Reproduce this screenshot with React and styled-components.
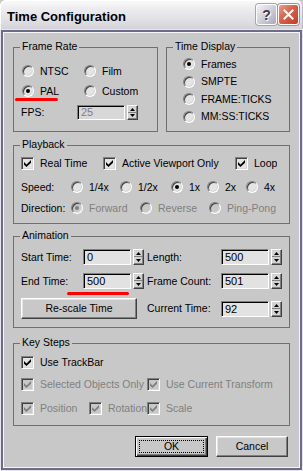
import React from "react";
import styled, { createGlobalStyle, css } from "styled-components";

const GlobalStyle = createGlobalStyle`
  html, body {
    margin: 0;
    padding: 0;
    background: #c8c8c8;
  }

  body {
    font-family: "Liberation Sans", Arial, sans-serif;
    font-size: 10.5px;
    line-height: 13px;
    color: #000;
  }
`;

function Check({ on, dis, w, label }) {
  return (
    <Cell $w={w}>
      <CheckBox $dis={dis}>
        {on && (
          <svg width="7" height="7" viewBox="0 0 7 7">
            <path d="M0 2L2.5 4.5L7 0V2.8L2.5 7L0 4.8Z" fill={dis ? "#808080" : "#000"} />
          </svg>
        )}
      </CheckBox>
      <Label $dis={dis}>{label}</Label>
    </Cell>
  );
}

function Radio({ on, dis, w, label }) {
  return (
    <Cell $w={w}>
      <RadioDot $on={on} $dis={dis} />
      <Label $dis={dis}>{label}</Label>
    </Cell>
  );
}

function Spinner({ value, dis, h = 16 }) {
  return (
    <SpinWrap>
      <Field $h={h} $dis={dis}>{value}</Field>
      <Arrows $h={h}>
        <ArrowBtn>
          <svg width="5" height="3" viewBox="0 0 5 3">
            <path d="M2.5 0L5 3H0Z" fill="#000" />
          </svg>
        </ArrowBtn>
        <ArrowBtn>
          <svg width="5" height="3" viewBox="0 0 5 3">
            <path d="M0 0H5L2.5 3Z" fill="#000" />
          </svg>
        </ArrowBtn>
      </Arrows>
    </SpinWrap>
  );
}

function App() {
  return (
    <>
      <GlobalStyle />
      <Window>
        <TitleBar>
          <Title>Time Configuration</Title>
          <CaptionButtons>
            <CaptionBtn>
              <HelpGlyph>?</HelpGlyph>
            </CaptionBtn>
            <CaptionBtn $close>
              <svg width="11" height="11" viewBox="0 0 11 11">
                <path d="M1.5 1.5L9.5 9.5M9.5 1.5L1.5 9.5" stroke="#fff" strokeWidth="2.2" strokeLinecap="square" />
              </svg>
            </CaptionBtn>
          </CaptionButtons>
        </TitleBar>

        <Body>
          <TopRow>
            <Group $w={145} $h={85}>
              <Legend>Frame Rate</Legend>
              <Row $mt={13} $pl={8} $h={20}>
                <Radio w={62} label="NTSC" />
                <Radio label="Film" />
              </Row>
              <Row $pl={8} $h={20}>
                <Radio w={62} label="PAL" on />
                <Radio label="Custom" />
              </Row>
              <Row $mt={4} $pl={7} $h={15}>
                <Cell $w={56}>
                  <Label>FPS:</Label>
                </Cell>
                <Spinner value="25" dis h={15} />
              </Row>
              <Mark $l={1} $t={50} $w={43} />
            </Group>

            <Group $w={124} $h={85}>
              <Legend>Time Display</Legend>
              <Stack $mt={7.5} $pl={16}>
                <Row $h={17.5}>
                  <Radio label="Frames" on />
                </Row>
                <Row $h={17.5}>
                  <Radio label="SMPTE" />
                </Row>
                <Row $h={17.5}>
                  <Radio label="FRAME:TICKS" />
                </Row>
                <Row $h={17.5}>
                  <Radio label="MM:SS:TICKS" />
                </Row>
              </Stack>
            </Group>
          </TopRow>

          <Group $h={79} $mt={13}>
            <Legend>Playback</Legend>
            <Row $mt={6} $h={22} $pl={7}>
              <Check w={82} on label="Real Time" />
              <Check w={132} on label="Active Viewport Only" />
              <Check on label="Loop" />
            </Row>
            <Row $mt={2} $h={22} $pl={7}>
              <Cell $w={50}>
                <Label>Speed:</Label>
              </Cell>
              <Radio w={49} label="1/4x" />
              <Radio w={51} label="1/2x" />
              <Radio w={36} label="1x" on />
              <Radio w={39} label="2x" />
              <Radio label="4x" />
            </Row>
            <Row $h={20} $pl={7}>
              <Cell $w={50}>
                <Label>Direction:</Label>
              </Cell>
              <Radio w={69} label="Forward" on dis />
              <Radio w={69} label="Reverse" dis />
              <Radio label="Ping-Pong" dis />
            </Row>
          </Group>

          <Group $h={92} $mt={12}>
            <Legend>Animation</Legend>
            <Row $mt={12} $h={16} $pl={7}>
              <Cell $w={126}>
                <FieldLabel $w={56}>Start Time:</FieldLabel>
                <Spinner value="0" />
              </Cell>
              <FieldLabel $w={74}>Length:</FieldLabel>
              <Spinner value="500" />
            </Row>
            <Row $mt={8} $h={16} $pl={7}>
              <Cell $w={126}>
                <FieldLabel $w={56}>End Time:</FieldLabel>
                <Spinner value="500" />
              </Cell>
              <FieldLabel $w={74}>Frame Count:</FieldLabel>
              <Spinner value="501" />
            </Row>
            <Row $mt={9} $h={21} $pl={7}>
              <Cell $w={126}>
                <PushButton $w={116}>Re-scale Time</PushButton>
              </Cell>
              <FieldLabel $w={74}>Current Time:</FieldLabel>
              <Spinner value="92" />
            </Row>
            <Mark $l={53} $t={55} $w={62} />
          </Group>

          <Group $h={83} $mt={15}>
            <Legend>Key Steps</Legend>
            <Row $mt={8} $h={20} $pl={7}>
              <Check on label="Use TrackBar" />
            </Row>
            <Row $mt={2} $h={20} $pl={7}>
              <Check w={126} on dis label="Selected Objects Only" />
              <Check on dis label="Use Current Transform" />
            </Row>
            <Row $mt={4} $h={20} $pl={7}>
              <Check w={68} on dis label="Position" />
              <Check w={58} on dis label="Rotation" />
              <Check on dis label="Scale" />
            </Row>
          </Group>

          <ButtonRow>
            <PushButton $w={73} $default>OK</PushButton>
            <PushButton $w={72}>Cancel</PushButton>
          </ButtonRow>
        </Body>
      </Window>
    </>
  );
}

const Window = styled.div`
  width: 303px;
  height: 471px;
  display: flex;
  flex-direction: column;
  overflow: hidden;
  background: #c8c8c8;
`;

const TitleBar = styled.div`
  flex: none;
  height: 29px;
  box-sizing: border-box;
  display: flex;
  align-items: flex-start;
  justify-content: space-between;
  padding: 4px 4px 0 7px;
  border-radius: 6px 6px 0 0;
  background: linear-gradient(#fbfbfc, #ededf0 30%, #e0e0e4 70%, #d2d2d8);
  box-shadow: inset 1px 1px 0 #ffffff, inset -1px 0 0 #b8b8c4;
`;

const Title = styled.span`
  margin-top: 2px;
  font-size: 13px;
  font-weight: bold;
  line-height: 21px;
  color: #000;
`;

const CaptionButtons = styled.div`
  display: flex;
  gap: 1px;
`;

const CaptionBtn = styled.div`
  width: 21px;
  height: 21px;
  box-sizing: border-box;
  border: 1px solid #ffffff;
  border-radius: 3px;
  display: flex;
  align-items: center;
  justify-content: center;
  background: ${(p) =>
    p.$close
      ? "linear-gradient(135deg, #ec9c8c, #d8604a 45%, #c23c26)"
      : "linear-gradient(135deg, #f2f2f6, #cfcfda 50%, #a8a8bc)"};
  box-shadow: 0 0 0 1px ${(p) => (p.$close ? "#b08a86" : "#a4a4b4")};
`;

const HelpGlyph = styled.span`
  font-size: 14px;
  font-weight: bold;
  line-height: 14px;
  color: #3c3c4c;
  text-shadow: 1px 1px 0 #ffffff;
`;

const Body = styled.div`
  flex: 1;
  box-sizing: border-box;
  padding: 0 13px;
  box-shadow: inset 0 0 0 1px #e6e6ec, inset 0 0 0 3px #6c6c88, inset 0 0 0 4px #f6f6f6;
`;

const TopRow = styled.div`
  display: flex;
  gap: 8px;
  margin-top: 18px;
`;

const Group = styled.div`
  position: relative;
  box-sizing: border-box;
  width: ${(p) => (p.$w ? `${p.$w}px` : "auto")};
  height: ${(p) => p.$h}px;
  margin-top: ${(p) => p.$mt || 0}px;
  border: 1px solid #707070;
`;

const Legend = styled.span`
  position: absolute;
  top: -8px;
  left: 6px;
  padding: 0 2px;
  background: #c8c8c8;
  line-height: 13px;
  white-space: nowrap;
`;

const Stack = styled.div`
  display: flex;
  flex-direction: column;
  margin-top: ${(p) => p.$mt || 0}px;
  padding-left: ${(p) => p.$pl || 0}px;
`;

const Row = styled.div`
  display: flex;
  align-items: center;
  height: ${(p) => p.$h}px;
  margin-top: ${(p) => p.$mt || 0}px;
  padding-left: ${(p) => p.$pl || 0}px;
`;

const Cell = styled.div`
  flex: none;
  display: flex;
  align-items: center;
  gap: 6px;
  width: ${(p) => (p.$w ? `${p.$w}px` : "auto")};
  overflow: hidden;
  white-space: nowrap;
`;

const Label = styled.span`
  color: ${(p) => (p.$dis ? "#808080" : "#000")};
  white-space: nowrap;
`;

const FieldLabel = styled.span`
  flex: none;
  width: ${(p) => p.$w}px;
  white-space: nowrap;
`;

const CheckBox = styled.span`
  flex: none;
  width: 13px;
  height: 13px;
  box-sizing: border-box;
  border: 1px solid;
  border-color: #808080 #ffffff #ffffff #808080;
  box-shadow: inset 1px 1px 0 #404040, inset -1px -1px 0 #d8d8d8;
  background: ${(p) => (p.$dis ? "#c8c8c8" : "#e4e4e4")};
  display: flex;
  align-items: center;
  justify-content: center;

  svg {
    display: block;
  }
`;

const RadioDot = styled.span`
  flex: none;
  width: 12px;
  height: 12px;
  box-sizing: border-box;
  border-radius: 50%;
  border: 1px solid;
  border-color: #808080 #ffffff #ffffff #808080;
  box-shadow: inset 1px 1px 0 #404040, inset -1px -1px 0 #d8d8d8;
  background: ${(p) => (p.$dis ? "#c8c8c8" : "#e4e4e4")};
  display: flex;
  align-items: center;
  justify-content: center;

  &::after {
    content: "";
    display: ${(p) => (p.$on ? "block" : "none")};
    width: 4px;
    height: 4px;
    border-radius: 50%;
    background: ${(p) => (p.$dis ? "#808080" : "#000")};
  }
`;

const SpinWrap = styled.div`
  flex: none;
  display: flex;
  gap: 2px;
`;

const Field = styled.div`
  width: 48px;
  height: ${(p) => p.$h}px;
  box-sizing: border-box;
  padding-left: 3px;
  border: 1px solid;
  border-color: #808080 #ffffff #ffffff #808080;
  box-shadow: inset 1px 1px 0 #000000;
  background: ${(p) => (p.$dis ? "#d8d8d8" : "#e2e2e2")};
  color: ${(p) => (p.$dis ? "#808080" : "#000")};
  font-size: 11px;
  line-height: ${(p) => p.$h - 2}px;
`;

const Arrows = styled.div`
  width: 11px;
  height: ${(p) => p.$h}px;
  display: flex;
  flex-direction: column;
  box-sizing: border-box;
  border: 1px solid;
  border-color: #ffffff #404040 #404040 #ffffff;
`;

const ArrowBtn = styled.div`
  flex: 1;
  display: flex;
  align-items: center;
  justify-content: center;
  background: #d4d4d4;
  box-shadow: inset -1px -1px 0 #808080;

  svg {
    display: block;
  }
`;

const PushButton = styled.button`
  flex: none;
  width: ${(p) => p.$w}px;
  height: 21px;
  box-sizing: border-box;
  margin: 0;
  padding: 0;
  font: inherit;
  color: #000;
  background: #c8c8c8;
  border: 1px solid;
  border-color: #ffffff #404040 #404040 #ffffff;
  box-shadow: inset -1px -1px 0 #808080, inset 1px 1px 0 #e4e4e4;

  ${(p) =>
    p.$default &&
    css`
      border: 1px solid #000;
      box-shadow: inset 1px 1px 0 #ffffff, inset -1px -1px 0 #404040, inset -2px -2px 0 #808080;
      outline: 1px dotted #000;
      outline-offset: -5px;
    `}
`;

const ButtonRow = styled.div`
  display: flex;
  justify-content: flex-end;
  gap: 8px;
  margin-top: 10px;
  padding-right: 2px;
`;

const Mark = styled.span`
  position: absolute;
  left: ${(p) => p.$l}px;
  top: ${(p) => p.$t}px;
  width: ${(p) => p.$w}px;
  height: 3px;
  border-radius: 2px;
  background: #ff0000;
`;

export default App;
